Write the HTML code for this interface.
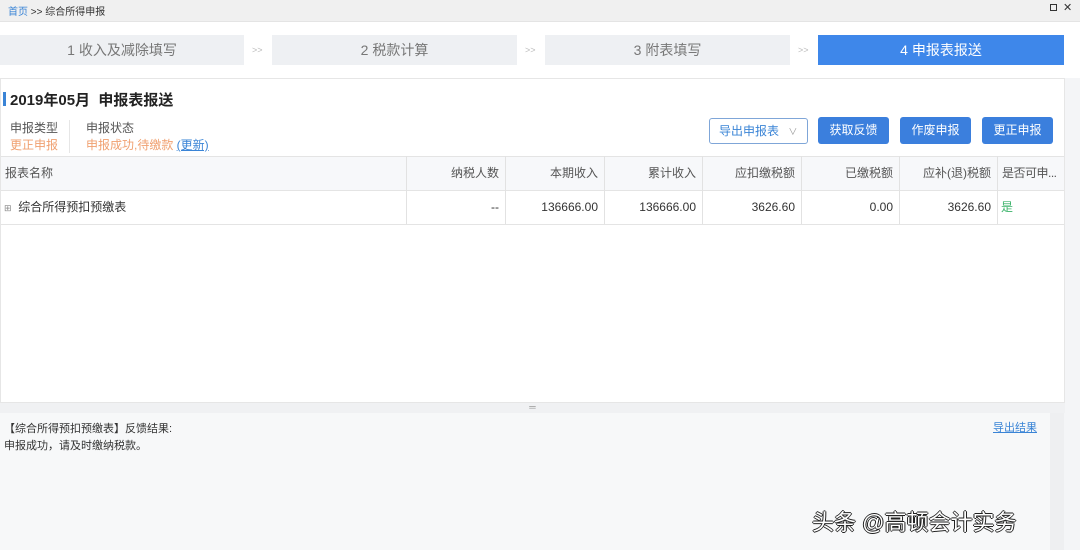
<!DOCTYPE html>
<html><head><meta charset="utf-8"><style>
*{margin:0;padding:0;box-sizing:border-box}
body{width:1080px;height:550px;overflow:hidden;background:#f4f5f7;font-family:"Liberation Sans","Noto Sans CJK SC",sans-serif;font-size:12px;color:#333;position:relative}
.a{position:absolute;white-space:nowrap}
.step{position:absolute;top:35px;height:30px;background:#eef0f3;color:#777;font-size:14px;text-align:center;line-height:30px}
.sep{position:absolute;top:35px;line-height:30px;color:#bbb;font-size:9px}
.btn{position:absolute;top:117px;height:27px;background:#3b7fdd;color:#fff;border-radius:3px;text-align:center;line-height:27px;font-size:12px;width:71px}
.th,.td{position:absolute;text-align:right;padding-right:6px;border-right:1px solid #e2e2e2;white-space:nowrap;overflow:hidden}
.th{top:156px;height:35px;line-height:35px;color:#555}
.td{top:191px;height:33px;line-height:33px;color:#333}
</style></head><body>
<div class="a" style="left:0;top:0;width:1080px;height:22px;background:#f0f0f0;border-bottom:1px solid #e4e4e4"></div>
<div class="a" style="left:8px;top:3px;font-size:10px"><span style="color:#3a84d6">首页</span> &gt;&gt; 综合所得申报</div>
<div class="a" style="left:1050px;top:4px;width:7px;height:7px;border:1px solid #333"></div>
<div class="a" style="left:1063px;top:1px;font-size:11px;color:#333">✕</div>
<div class="a" style="left:0;top:22px;width:1080px;height:56px;background:#fff"></div>
<div class="step" style="left:0;width:244px">1 收入及减除填写</div>
<div class="sep" style="left:252px">&gt;&gt;</div>
<div class="step" style="left:272px;width:245px">2 税款计算</div>
<div class="sep" style="left:525px">&gt;&gt;</div>
<div class="step" style="left:545px;width:245px">3 附表填写</div>
<div class="sep" style="left:798px">&gt;&gt;</div>
<div class="step" style="left:818px;width:246px;background:#3e87ea;color:#fff">4 申报表报送</div>
<div class="a" style="left:0;top:78px;width:1065px;height:325px;background:#fff;border:1px solid #e6e6e6"></div>
<div class="a" style="left:3px;top:92px;width:3px;height:14px;background:#3a84d6"></div>
<div class="a" style="left:10px;top:89px;font-size:15px;font-weight:bold;color:#222">2019年05月&nbsp; 申报表报送</div>
<div class="a" style="left:10px;top:119px;color:#555">申报类型</div>
<div class="a" style="left:10px;top:136px;color:#f0a070">更正申报</div>
<div class="a" style="left:69px;top:120px;width:1px;height:33px;background:#e6e6e6"></div>
<div class="a" style="left:86px;top:119px;color:#555">申报状态</div>
<div class="a" style="left:86px;top:136px;color:#f0a070">申报成功,待缴款 <span style="color:#3a84d6;text-decoration:underline">(更新)</span></div>
<div class="a" style="left:709px;top:118px;width:99px;height:26px;border:1px solid #7fa6d8;border-radius:3px;color:#3a84d6;line-height:24px;padding-left:9px">导出申报表 <span style="color:#999;font-size:9px;margin-left:6px">∨</span></div>
<div class="btn" style="left:818px">获取反馈</div>
<div class="btn" style="left:900px">作废申报</div>
<div class="btn" style="left:982px">更正申报</div>
<div class="a" style="left:1px;top:156px;width:1063px;height:35px;background:#f7f8fa;border-top:1px solid #e4e4e4;border-bottom:1px solid #e4e4e4"></div>
<div class="a" style="left:1px;top:224px;width:1063px;height:1px;background:#e4e4e4"></div>
<div class="th" style="left:0;width:407px;text-align:left;padding-left:5px">报表名称</div>
<div class="th" style="left:407px;width:99px">纳税人数</div>
<div class="th" style="left:506px;width:99px">本期收入</div>
<div class="th" style="left:605px;width:98px">累计收入</div>
<div class="th" style="left:703px;width:99px">应扣缴税额</div>
<div class="th" style="left:802px;width:98px">已缴税额</div>
<div class="th" style="left:900px;width:98px">应补(退)税额</div>
<div class="th" style="left:998px;width:66px;text-align:left;padding-left:4px;padding-right:0;border:none;letter-spacing:-0.5px">是否可申...</div>
<div class="td" style="left:0;width:407px;text-align:left;padding-left:4px"><span style="font-size:9px;color:#888">⊞</span>&nbsp; 综合所得预扣预缴表</div>
<div class="td" style="left:407px;width:99px">--</div>
<div class="td" style="left:506px;width:99px">136666.00</div>
<div class="td" style="left:605px;width:98px">136666.00</div>
<div class="td" style="left:703px;width:99px">3626.60</div>
<div class="td" style="left:802px;width:98px">0.00</div>
<div class="td" style="left:900px;width:98px">3626.60</div>
<div class="td" style="left:998px;width:66px;text-align:left;padding-left:3px;border:none;color:#3bb36a">是</div>
<div class="a" style="left:0;top:403px;width:1065px;height:10px;background:#f0f1f3;text-align:center;font-size:9px;line-height:9px;color:#999">═</div>
<div class="a" style="left:0;top:413px;width:1050px;height:137px;background:#f7f8f9"></div>
<div class="a" style="left:1050px;top:413px;width:14px;height:137px;background:#eeeff1"></div>
<div class="a" style="left:4px;top:420px;font-size:11px;color:#333">【综合所得预扣预缴表】反馈结果:</div>
<div class="a" style="left:4px;top:437px;font-size:11px;color:#333">申报成功，请及时缴纳税款。</div>
<div class="a" style="left:993px;top:419px;font-size:11px;color:#3a84d6;text-decoration:underline">导出结果</div>
<div class="a" style="left:812px;top:505px;font-size:22px;color:#fff;text-shadow:-1px 0 #222,1px 0 #222,0 -1px #222,0 1px #222">头条 @高顿会计实务</div>
</body></html>
